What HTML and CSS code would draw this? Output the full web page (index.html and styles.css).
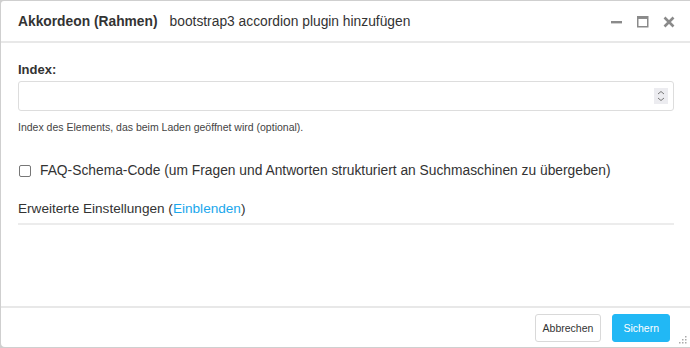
FILE: index.html
```html
<!DOCTYPE html>
<html>
  <head>
    <title>Akkordeon (Rahmen)</title>
    <link rel="stylesheet" href="styles.css">
  </head>
  <body>
    <div class="dialog">
      <div class="dialog-header">
        <span class="title">Akkordeon (Rahmen)</span>
        <span class="subtitle">bootstrap3 accordion plugin hinzufügen</span>
        <div class="window-buttons">
          <svg width="12" height="12" viewBox="0 0 12 12"><rect x="0" y="5" width="11" height="2.4" fill="#8a8a8a"/></svg>
          <svg width="12" height="12" viewBox="0 0 12 12"><rect x="0.75" y="0.75" width="10" height="10" fill="none" stroke="#8a8a8a" stroke-width="1.5"/><rect x="0.75" y="0.75" width="10" height="2.2" fill="#8a8a8a"/></svg>
          <svg width="12" height="12" viewBox="0 0 12 12"><path d="M1.5 1.5 L10.5 10.5 M10.5 1.5 L1.5 10.5" stroke="#8a8a8a" stroke-width="2.6"/></svg>
        </div>
      </div>

      <div class="dialog-body">
        <label class="field-label">Index:</label>
        <div class="input">
          <span class="spinner">
            <svg width="14" height="16" viewBox="0 0 14 16"><path d="M4 6 L7 3.5 L10 6 M4 10 L7 12.5 L10 10" fill="none" stroke="#777" stroke-width="1"/></svg>
          </span>
        </div>
        <div class="help">Index des Elements, das beim Laden geöffnet wird (optional).</div>

        <label class="check">
          <span class="box"></span>
          FAQ-Schema-Code (um Fragen und Antworten strukturiert an Suchmaschinen zu übergeben)
        </label>

        <div class="advanced">
          Erweiterte Einstellungen (<a href="#">Einblenden</a>)
        </div>
      </div>

      <div class="dialog-footer">
        <button class="btn">Abbrechen</button>
        <button class="btn btn-primary">Sichern</button>
        <svg class="grip" width="10" height="10" viewBox="0 0 10 10">
          <rect x="7" y="1" width="1.5" height="1.5" fill="#aaa"/>
          <rect x="4" y="4" width="1.5" height="1.5" fill="#aaa"/>
          <rect x="7" y="4" width="1.5" height="1.5" fill="#aaa"/>
          <rect x="1" y="7" width="1.5" height="1.5" fill="#aaa"/>
          <rect x="4" y="7" width="1.5" height="1.5" fill="#aaa"/>
          <rect x="7" y="7" width="1.5" height="1.5" fill="#aaa"/>
        </svg>
      </div>
    </div>
  </body>
</html>
```

FILE: styles.css
```css
html, body {
  margin: 0;
  height: 100%;
}
body {
  background-color: #cfcfcf;
  font-family: "Liberation Sans", Arial, sans-serif;
  color: #333;
  padding: 1px 0 1px 1px;
  box-sizing: border-box;
}
.dialog {
  background-color: #fff;
  height: 100%;
  border-radius: 3px 0 0 4px;
  display: flex;
  flex-direction: column;
}
.dialog-header {
  height: 40px;
  border-bottom: 2px solid #e8e8e8;
  display: flex;
  align-items: center;
  padding: 0 15px 0 17px;
}
.title {
  font-weight: bold;
  font-size: 13.8px;
  color: #333;
}
.subtitle {
  font-size: 13.8px;
  margin-left: 12px;
  color: #333;
}
.window-buttons {
  margin-left: auto;
  display: flex;
  gap: 14px;
  padding-top: 1px;
}
.dialog-body {
  flex: 1;
  padding: 19px 16px 0 17px;
}
.field-label {
  display: block;
  font-weight: bold;
  font-size: 13px;
  margin-bottom: 4px;
}
.input {
  height: 28px;
  border: 1px solid #ddd;
  border-radius: 3px;
  display: flex;
  align-items: center;
  justify-content: flex-end;
  padding-right: 5px;
}
.spinner {
  background-color: #ececf0;
  width: 14px;
  height: 16px;
  display: flex;
}
.help {
  font-size: 10.5px;
  color: #444;
  margin-top: 10px;
}
.check {
  display: flex;
  align-items: center;
  font-size: 13.8px;
  margin-top: 30px;
}
.box {
  width: 10px;
  height: 10px;
  border: 1px solid #777;
  border-radius: 2px;
  margin-right: 9px;
  margin-left: 1px;
}
.advanced {
  font-size: 13.6px;
  margin-top: 23px;
  padding-bottom: 7px;
  border-bottom: 2px solid #ececec;
}
.advanced a {
  color: #1aa7ec;
  text-decoration: none;
}
.dialog-footer {
  box-sizing: border-box;
  height: 41px;
  border-top: 2px solid #e8e8e8;
  display: flex;
  align-items: flex-start;
  justify-content: flex-end;
  padding: 6px 20px 0 0;
  gap: 11px;
  position: relative;
}
.btn {
  font-family: "Liberation Sans", Arial, sans-serif;
  font-size: 10.5px;
  height: 28px;
  padding: 0 7px;
  border: 1px solid #d9d9d9;
  border-radius: 3px;
  background-color: #fff;
  color: #333;
}
.btn-primary {
  padding: 0 10px;
  background-color: #21b8f5;
  border-color: #21b8f5;
  color: #fff;
}
.grip {
  position: absolute;
  right: 2px;
  bottom: 2px;
}
```
